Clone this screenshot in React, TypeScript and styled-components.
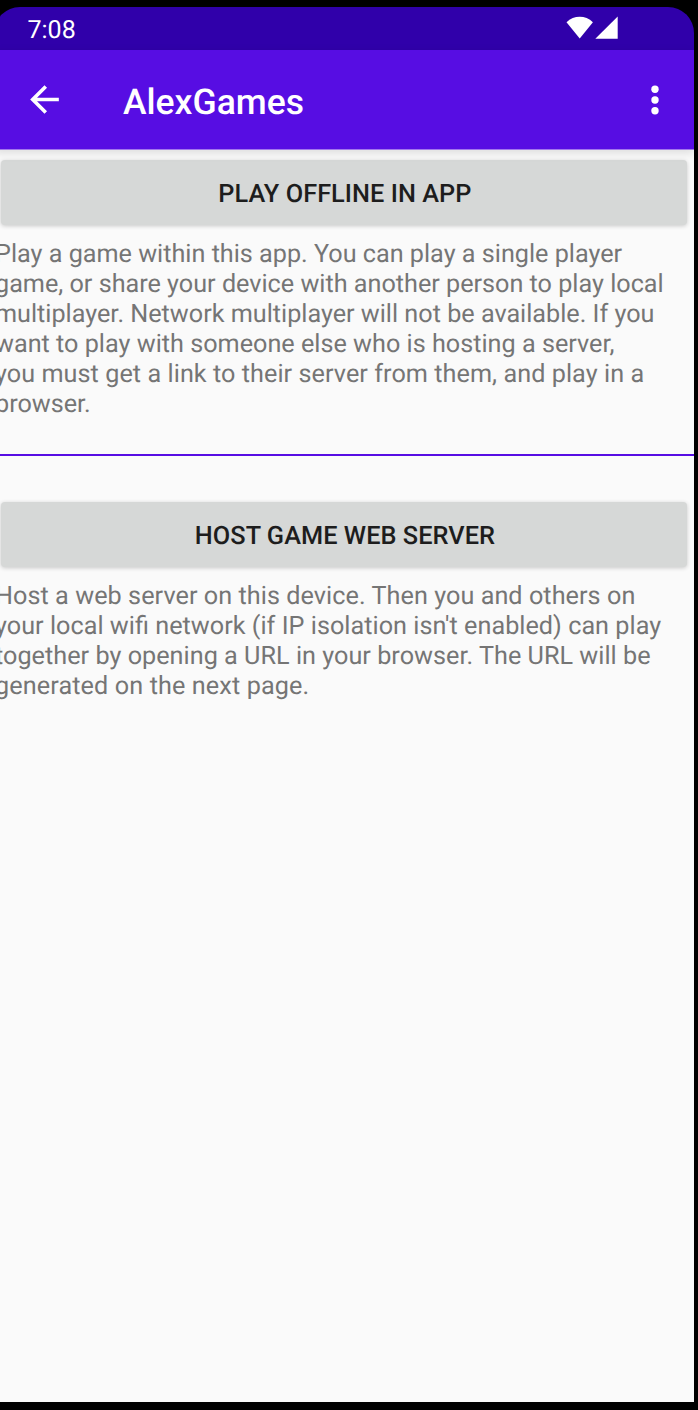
import React from "react";
import styled, { createGlobalStyle } from "styled-components";

const GlobalStyle = createGlobalStyle`
  * { box-sizing: border-box; }
  body {
    margin: 0;
    background: #000;
    overflow: hidden;
    font-family: Roboto, sans-serif;
    text-rendering: geometricPrecision;
  }
`;

const Device = styled.div`
  height: 1410px;
  padding: 7px 4px 8px 0;
  background: #000;
  overflow: hidden;
`;

const Screen = styled.div`
  display: flex;
  flex-direction: column;
  height: 1395px;
  margin-left: -6px;
  border-radius: 26px 26px 0 0;
  overflow: hidden;
`;

const StatusBar = styled.div`
  display: flex;
  align-items: center;
  justify-content: space-between;
  flex: none;
  height: 43px;
  padding: 4px 76px 0 33.5px;
  background: #3000aa;
  color: #fff;
`;

const Clock = styled.span`
  font-size: 25px;
  line-height: 30px;
`;

const StatusIcons = styled.svg`
  margin-top: -5px;
`;

const AppBar = styled.header`
  display: flex;
  align-items: center;
  flex: none;
  height: 100px;
  padding: 0 23.5px 0 29px;
  background: #570de3;
  border-bottom: 1px solid #a277ed;
  color: #fff;
  box-shadow: 0 3px 9px rgba(0, 0, 0, 0.12);
  z-index: 1;
`;

const IconButton = styled.button`
  display: flex;
  flex: none;
  padding: 0;
  border: 0;
  background: none;
  color: inherit;
`;

const Title = styled.h1`
  flex: 1;
  margin: 4px 0 0 57px;
  font-size: 35.5px;
  font-weight: 500;
  line-height: 44px;
`;

const Content = styled.main`
  flex: 1;
  padding: 10px 0 0 6px;
  background: #fafafa;
`;

const ActionButton = styled.button`
  display: block;
  width: 686px;
  height: 65px;
  margin: 0 0 0 1.4px;
  padding: 4px 0 0 1px;
  border: 0;
  border-radius: 4px;
  background: #d6d8d7;
  color: #1d1d1d;
  box-shadow: 0 1px 4px rgba(0, 0, 0, 0.2);
  font: 500 25.3px/30px Roboto, sans-serif;
  letter-spacing: 0.05px;
  text-rendering: geometricPrecision;
  text-align: center;
`;

const Description = styled.p`
  margin: 15px 0 0 -5px;
  color: #757575;
  font-size: 25.2px;
  line-height: 29.9px;
  white-space: nowrap;
`;

const Line = styled.span<{ $tracking?: number }>`
  display: block;
  letter-spacing: ${({ $tracking = 0 }) => $tracking}px;
  font-feature-settings: "liga" 1;
`;

const Divider = styled.hr`
  height: 2px;
  margin: 34.6px 0 46px -6px;
  border: 0;
  background: #570de3;
`;

type TextLine = { text: string; tracking?: number };

const offlineText: TextLine[] = [
  { text: "Play a game within this app. You can play a single player" },
  { text: "game, or share your device with another person to play local" },
  { text: "multiplayer. Network multiplayer will not be available. If you" },
  { text: "want to play with someone else who is hosting a server,", tracking: 0.01 },
  { text: "you must get a link to their server from them, and play in a", tracking: 0.06 },
  { text: "browser." },
];

const hostText: TextLine[] = [
  { text: "Host a web server on this device. Then you and others on", tracking: 0.06 },
  { text: "your local wifi network (if IP isolation isn't enabled) can play", tracking: 0.03 },
  { text: "together by opening a URL in your browser. The URL will be", tracking: 0.03 },
  { text: "generated on the next page.", tracking: 0.12 },
];

function Paragraph({ lines }: { lines: TextLine[] }) {
  return (
    <Description>
      {lines.map((line) => (
        <Line key={line.text} $tracking={line.tracking}>
          {line.text}
        </Line>
      ))}
    </Description>
  );
}

export default function App() {
  return (
    <>
      <GlobalStyle />
      <Device>
        <Screen>
          <StatusBar>
            <Clock>7:08</Clock>
            <StatusIcons width="52" height="24" viewBox="0 0 52 24" fill="#fff" aria-hidden="true">
              <path d="M.5 6.2C8-1.1 19.5-1.1 26.9 6.2L13.7 22.4z" />
              <path d="M51.7 .6V22.8H29.3z" />
            </StatusIcons>
          </StatusBar>
          <AppBar>
            <IconButton aria-label="Back">
              <svg width="43" height="43" viewBox="0 0 24 24" fill="currentColor">
                <path d="M20 11H7.83l5.59-5.59L12 4l-8 8 8 8 1.41-1.41L7.83 13H20v-2z" />
              </svg>
            </IconButton>
            <Title>AlexGames</Title>
            <IconButton aria-label="More options">
              <svg width="32" height="32" viewBox="0 0 32 32" fill="currentColor">
                <circle cx="16" cy="5.3" r="3.7" />
                <circle cx="16" cy="16" r="3.7" />
                <circle cx="16" cy="26.7" r="3.7" />
              </svg>
            </IconButton>
          </AppBar>
          <Content>
            <ActionButton>PLAY OFFLINE IN APP</ActionButton>
            <Paragraph lines={offlineText} />
            <Divider />
            <ActionButton>HOST GAME WEB SERVER</ActionButton>
            <Paragraph lines={hostText} />
          </Content>
        </Screen>
      </Device>
    </>
  );
}
